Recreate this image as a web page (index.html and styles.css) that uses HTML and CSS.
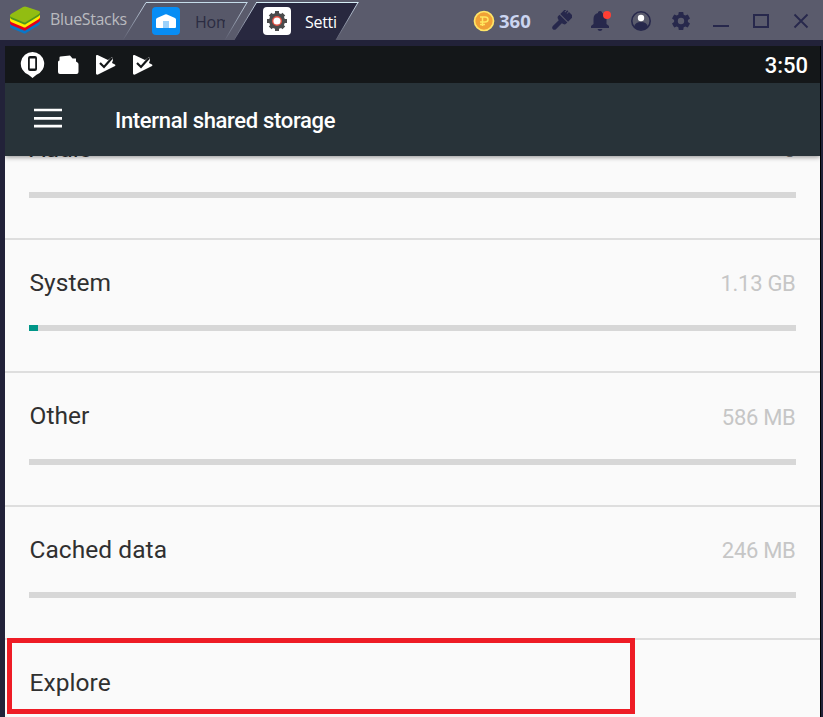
FILE: index.html
```html
<!DOCTYPE html>
<html lang="en">
<head>
<meta charset="utf-8">
<title>BlueStacks</title>
<link rel="stylesheet" href="styles.css">
</head>
<body>
<header class="titlebar">
  <div class="brand">
    <svg width="32" height="28" viewBox="0 0 32 28">
      <path d="M1 16v4q0 1 1 2l12 5q2 1 3 0l13-8q1-1 1-2v-4z" fill="#0878c8"/>
      <path d="M1 13v4q0 1 1 2l12 5q2 1 3 0l13-8q1-1 1-2v-4z" fill="#e3001b"/>
      <path d="M1 11v3q0 1 1 2l12 5q2 1 3 0l13-8q1-1 1-2V9z" fill="#ffed00"/>
      <path d="M1 9v2q0 1 1 2l12 5q2 1 3 0l13-8q1-1 1-2V7z" fill="#4e961d"/>
      <path d="M2 8 14 1q2-1 4 0l12 4q2 1 0 3l-13 8q-1 1-3 0L2 11q-2-1 0-3z" fill="#92bd12"/>
    </svg>
    <span class="brand-name">BlueStacks</span>
  </div>
  <nav class="tabs">
    <div class="tab tab-home">
      <svg class="tab-shape" width="126" height="40" viewBox="0 0 126 40">
        <defs><linearGradient id="edge" x1="0" y1="0" x2="0" y2="1"><stop offset="0" stop-color="#c9d8e8"/><stop offset="1" stop-color="#5a5b6d"/></linearGradient></defs>
        <path d="M1 40 24 2.500H125L103 40z" fill="#575869"/>
        <path d="M1 40 24 2.500H125L103 40" fill="none" stroke="url(#edge)"/>
        <path d="M24 2.500H125.500" fill="none" stroke="#c5dce9"/>
      </svg>
      <svg class="tab-icon" width="28" height="28" viewBox="0 0 28 28"><rect width="28" height="28" rx="4" fill="#078df4"/><path d="M4 12.500q0-1 1-1.500l8-3.600q1-.5 2 0l8 3.600q1 .5 1 1.500V20q0 1-1 1H5q-1 0-1-1z" fill="#fff"/><path d="M11 14h6v7h-6z" fill="#9bd1fb"/></svg>
      <span class="tab-label">Hom</span>
    </div>
    <div class="tab tab-settings">
      <svg class="tab-shape" width="126" height="40" viewBox="0 0 126 40">
        <path d="M1 40 23.500 2.500H125L103 40z" fill="#28283f"/>
        <path d="M1 40 23.500 2.500M125 2.500 103 40" fill="none" stroke="url(#edge)"/>
        <path d="M23 2.500H125.500" fill="none" stroke="#d5edf5"/>
      </svg>
      <svg class="tab-icon" width="28" height="28" viewBox="0 0 28 28"><rect width="28" height="28" rx="4" fill="#fff"/><circle cx="14" cy="14" r="8" fill="#4a4b4c"/><path d="M14 4v20M4 14h20M7.200 7.200l13.600 13.600M20.800 7.200 7.200 20.800" stroke="#4a4b4c" stroke-width="4"/><circle cx="14" cy="14" r="4.300" fill="#fff" stroke="#df4e40" stroke-width="1.400"/></svg>
      <span class="tab-label">Setti</span>
    </div>
  </nav>
  <div class="tools">
    <svg class="coin" width="22" height="22" viewBox="0 0 22 22"><circle cx="11" cy="11" r="9.500" fill="#f0a136" stroke="#ffe567" stroke-width="1.700"/><path d="M9.500 16V7h2.500q3 0 3 2.500T12 12H7M7 7h3M7 14.500h5" fill="none" stroke="#ffe85f" stroke-width="1.500"/></svg>
    <span class="points">360</span>
    <svg class="brush" width="22" height="22" viewBox="0 0 22 22"><g transform="rotate(45 11 11)" fill="#27284c"><path d="M5.500 -1h1.500v3h.9v-3h1.500v2.500h.9V-1h6.200v7.500h-11zM5.500 7.500h11v2q0 2-3.300 2.500v8q0 2.500-2.200 2.500t-2.200-2.500v-8Q5.500 11.500 5.500 9.500z"/></g></svg>
    <svg class="bell" width="22" height="22" viewBox="0 0 22 22"><path d="M1 18v-2l2.500-2V9q0-5 4.500-6V2q2-2 4 0v1q4.500 1 4.500 6v5l2.500 2v2zM7.500 19h5q-.5 2-2.500 2t-2.500-2z" fill="#27284c"/><circle cx="17" cy="5" r="4" fill="#ff3f34"/></svg>
    <svg class="user" width="22" height="22" viewBox="0 0 22 22"><circle cx="11" cy="11" r="9.200" fill="none" stroke="#27284c" stroke-width="1.600"/><path d="M4 17q1-5 7-5t7 5q-3 3-7 3t-7-3z" fill="#27284c"/><circle cx="11" cy="8" r="3.200" fill="#fff"/></svg>
    <svg class="gear" width="20" height="20" viewBox="0 0 20 20"><path fill="#27284c" fill-rule="evenodd" d="M7.800 1h4.400l.5 2.700 1.600.9 2.500-1 2.200 3.800-2.100 1.700v1.800l2.100 1.700-2.200 3.800-2.500-1-1.600.9-.5 2.700H7.800l-.5-2.700-1.600-.9-2.500 1L1 12.600l2.100-1.700V9.100L1 7.400l2.200-3.800 2.500 1 1.600-.9zM10 6.800a3.200 3.200 0 1 0 0 6.400 3.200 3.200 0 0 0 0-6.400z"/></svg>
    <svg class="window-controls" width="96" height="16" viewBox="0 0 96 16" fill="none" stroke="#27284c"><path d="M0 13h16" stroke-width="2"/><path d="M41 2h14v12H41z" stroke-width="2"/><path d="m81.500 1.500 13 13m0-13-13 13" stroke-width="1.800"/></svg>
  </div>
</header>
<main class="device">
  <div class="statusbar">
    <svg width="136" height="28" viewBox="0 0 136 28" fill="#fff">
      <path fill-rule="evenodd" d="M12.500 1A11.700 11.700 0 0 0 8.500 23.700L12.500 27l4-3.300A11.700 11.700 0 0 0 12.500 1zM10 5h5q2 0 2 2v11q0 2-2 2h-5q-2 0-2-2V7q0-2 2-2zM9.800 7.500v10h5.400v-10z"/>
      <path d="M38 11q0-1.500 1.500-1.500V6.500q0-1 1-1L50 4.500l2.500 3h3.500v3l1.500 1q1 .5 1 2V21q0 2-2 2H40q-2 0-2-2z"/>
      <g id="check"><path d="M76 5q0-1.500 1.500-1l10.500 5 4-3 1 3-1 3 3 1.500q1 .5 0 1.500L78 23.500q-2 .5-2-1z"/><path d="m80 12 4 4L92 7" fill="none" stroke="#141719" stroke-width="2.200"/></g>
      <use href="#check" x="37"/>
    </svg>
    <span class="clock">3:50</span>
  </div>
  <div class="appbar">
    <svg class="menu" width="28" height="20" viewBox="0 0 28 20"><path d="M0 2h28M0 10.400h28M0 18.200h28" stroke="#fff" stroke-width="2.700"/></svg>
    <h1>Internal shared storage</h1>
  </div>
  <section class="list">
    <div class="row"><div class="line"><span class="name">Audio</span><span class="size">0</span></div><div class="meter"></div></div>
    <div class="row"><div class="line"><span class="name">System</span><span class="size">1.13 GB</span></div><div class="meter"><div class="fill"></div></div></div>
    <div class="row"><div class="line"><span class="name">Other</span><span class="size">586 MB</span></div><div class="meter"></div></div>
    <div class="row"><div class="line"><span class="name">Cached data</span><span class="size">246 MB</span></div><div class="meter"></div></div>
    <div class="row"><div class="line"><span class="name">Explore</span></div></div>
  </section>
</main>
<div class="highlight"></div>
</body>
</html>
```
FILE: styles.css
```css
* { box-sizing: border-box; }
body {
  margin: 0;
  width: 823px;
  height: 717px;
  overflow: hidden;
  position: relative;
  background: #222239;
  font-family: Roboto, sans-serif;
}
svg { display: block; flex: none; }
.titlebar {
  height: 40px;
  display: flex;
  background: #5a5b6c;
  font-family: "Open Sans", sans-serif;
}
.brand { display: flex; width: 122px; padding: 6px 0 0 9px; flex: none; }
.brand-name {
  margin: 1px 0 0 9px;
  font-size: 16px;
  line-height: 24px;
  letter-spacing: -0.35px;
  color: #b9babf;
}
.tabs { display: flex; flex: none; }
.tab { position: relative; display: flex; width: 126px; height: 40px; padding: 7px 0 0 30px; }
.tab-settings { margin-left: -15px; }
.tab-shape { position: absolute; left: 0; top: 0; }
.tab-icon, .tab-label { position: relative; }
.tab-home .tab-icon { left: -0.5px; }
.tab-label {
  margin: 2px 0 0 15px;
  width: 30px;
  overflow: hidden;
  font-size: 16px;
  line-height: 26px;
  letter-spacing: -0.2px;
  color: #2b2c42;
}
.tab-settings .tab-label { width: 32px; margin-left: 14px; letter-spacing: -0.3px; color: #fff; }
.tools { display: flex; flex: none; align-items: center; margin-left: 114px; padding-top: 1px; }
.points { margin-left: 4px; width: 37px; font-size: 18.5px; font-weight: 700; line-height: 24px; color: #cbd5f0; }
.brush { margin-left: 14px; }
.bell { margin-left: 18px; }
.user { margin-left: 18px; }
.gear { margin-left: 19px; }
.window-controls { margin-left: 22px; }
.device {
  margin: 6px 0 0 5px;
  width: 816px;
  height: 671px;
  border-right: 1px solid #000;
  background: #fafafa;
  display: flex;
  flex-direction: column;
}
.statusbar {
  flex: none;
  height: 37px;
  padding: 0 12px 0 15px;
  display: flex;
  align-items: center;
  justify-content: space-between;
  background: #141719;
}
.clock { font-size: 22px; font-weight: 500; line-height: 26px; color: #fff; padding-top: 2px; }
.appbar {
  flex: none;
  position: relative;
  z-index: 1;
  height: 73px;
  display: flex;
  align-items: center;
  padding-left: 29px;
  background: #283339;
  box-shadow: 0 1px 5px rgba(0, 0, 0, 0.45);
  clip-path: inset(0 0 -10px 0);
}
.menu { margin-top: -3px; }
.appbar h1 { margin: 1px 0 0 53px; font-size: 22px; font-weight: 500; letter-spacing: -0.32px; color: #fff; white-space: nowrap; }
.list { flex: 1; min-height: 0; overflow: hidden; display: flex; flex-direction: column; }
.row {
  flex: none;
  height: 133.6px;
  padding: 27px 24.5px 0;
  border-bottom: 2px solid #dedede;
}
.row:first-child { margin-top: -50px; }
.line { height: 32px; display: flex; justify-content: space-between; align-items: center; }
.name { font-size: 24.5px; line-height: 32px; letter-spacing: 0.05px; color: #303030; }
.size { font-size: 22px; letter-spacing: -0.3px; color: #c6c6c6; padding-top: 2px; }
.row:first-child .size { color: #777; padding-top: 0; }
.meter { height: 6px; margin: 26.6px 0 0 -0.5px; background: #d7d7d7; }
.fill { width: 8.5px; height: 6px; background: #009688; }
.highlight {
  position: absolute;
  left: 7px;
  top: 638px;
  width: 628px;
  height: 76px;
  border: 5px solid #ee1c25;
}
```
